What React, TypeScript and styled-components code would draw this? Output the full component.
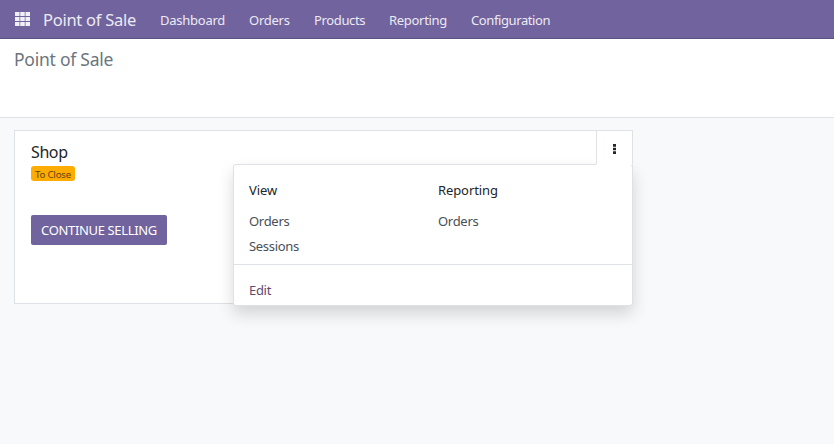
import React from "react";
import styled, { createGlobalStyle } from "styled-components";

const GlobalStyle = createGlobalStyle`
  * { box-sizing: border-box; }
  html, body { margin: 0; height: 100%; background: #f8f9fa; }
  body {
    font-family: "Noto Sans", "Open Sans", sans-serif;
    font-size: 13px;
    color: #212529;
  }
`;

const Page = styled.div`
  display: flex;
  flex-direction: column;
  width: 834px;
  height: 444px;
  overflow: hidden;
  background: #f8f9fb;
`;

const Navbar = styled.nav`
  display: flex;
  align-items: center;
  flex: none;
  height: 39px;
  padding: 0 0 0 15px;
  background: #71639e;
  border-bottom: 1px solid #5a4f7f;
  color: #eceaf3;
`;

const AppsIcon = styled.svg`
  display: block;
  flex: none;
  width: 15px;
  height: 14px;
  margin-right: 13px;
`;

const Brand = styled.a`
  flex: none;
  width: 117px;
  line-height: 38px;
  padding-top: 2px;
  font-size: 16.5px;
  letter-spacing: -0.27px;
  white-space: nowrap;
`;

const NavLink = styled.a<{ $width: number; $tracking: number }>`
  flex: none;
  width: ${(p) => p.$width}px;
  line-height: 38px;
  padding-top: 2px;
  letter-spacing: ${(p) => p.$tracking}px;
  white-space: nowrap;
`;

const ControlPanel = styled.header`
  flex: none;
  height: 79px;
  padding: 6px 14px;
  background: #fff;
  border-bottom: 1px solid #dee2e6;
`;

const Title = styled.h1`
  margin: 0;
  font-size: 17.5px;
  font-weight: 400;
  line-height: 28px;
  letter-spacing: -0.24px;
  color: #6c757d;
`;

const Content = styled.main`
  flex: 1;
  padding: 12px 14px;
`;

const Card = styled.section`
  position: relative;
  display: flex;
  flex-direction: column;
  align-items: flex-start;
  width: 619px;
  height: 174px;
  padding: 9px 16px;
  background: #fff;
  border: 1px solid #dee2e6;
`;

const CardTitle = styled.h2`
  margin: 0;
  font-size: 16px;
  font-weight: 400;
  line-height: 24px;
  letter-spacing: -0.4px;
`;

const Badge = styled.span`
  width: 44px;
  height: 15px;
  margin-top: 2px;
  padding: 0 4px;
  border-radius: 3px;
  background: #ffac00;
  color: #664500;
  font-size: 9.75px;
  letter-spacing: -0.24px;
  line-height: 17px;
  white-space: nowrap;
`;

const PrimaryButton = styled.button`
  width: 136px;
  height: 30px;
  margin-top: 34px;
  padding: 0;
  border: 0;
  border-radius: 2px;
  background: #71639e;
  color: #fff;
  font: inherit;
  line-height: 30px;
  letter-spacing: -0.35px;
  white-space: nowrap;
`;

const Toggle = styled.button`
  position: absolute;
  z-index: 2;
  top: -1px;
  right: -1px;
  display: flex;
  align-items: center;
  justify-content: center;
  width: 37px;
  height: 35px;
  padding: 3px 0 0;
  background: #fff;
  border: 1px solid #dee2e6;
  border-bottom-color: #fff;
`;

const Menu = styled.div`
  position: absolute;
  z-index: 1;
  top: 33px;
  right: -1px;
  width: 400px;
  height: 142px;
  background: #fff;
  border: 1px solid #dee2e6;
  border-radius: 3px;
  box-shadow: 0 8px 16px rgba(0, 0, 0, 0.15);
`;

const MenuColumns = styled.div`
  display: grid;
  grid-template-columns: 189px 1fr;
  height: 100px;
  padding: 13px 0 0 15px;
  border-bottom: 1px solid #dee2e6;
`;

const MenuHeading = styled.h5`
  margin: 0 0 6px;
  font-size: 13px;
  font-weight: 400;
  line-height: 25px;
  letter-spacing: -0.1px;
  color: #212529;
`;

const MenuItem = styled.a<{ $accent?: boolean }>`
  display: block;
  line-height: 25px;
  letter-spacing: -0.3px;
  color: ${(p) => (p.$accent ? "#5f4a72" : "#495057")};
`;

const MenuFooter = styled.div`
  padding: 13px 0 0 15px;
`;

const navLinks = [
  { label: "Dashboard", width: 89, tracking: -0.25 },
  { label: "Orders", width: 65, tracking: -0.25 },
  { label: "Products", width: 75, tracking: -0.35 },
  { label: "Reporting", width: 82, tracking: -0.3 },
  { label: "Configuration", width: 90, tracking: -0.4 },
];

const menuSections = [
  { heading: "View", items: ["Orders", "Sessions"] },
  { heading: "Reporting", items: ["Orders"] },
];

export default function App() {
  return (
    <Page>
      <GlobalStyle />
      <Navbar>
        <AppsIcon viewBox="0 0 15 14" fill="#f1eff5">
          {[0, 5, 10].map((y) =>
            [0, 5.25, 10.5].map((x) => (
              <rect key={`${x}-${y}`} x={x} y={y} width="4.5" height="4" />
            ))
          )}
        </AppsIcon>
        <Brand>Point of Sale</Brand>
        {navLinks.map((link) => (
          <NavLink key={link.label} $width={link.width} $tracking={link.tracking}>
            {link.label}
          </NavLink>
        ))}
      </Navbar>
      <ControlPanel>
        <Title>Point of Sale</Title>
      </ControlPanel>
      <Content>
        <Card>
          <CardTitle>Shop</CardTitle>
          <Badge>To Close</Badge>
          <PrimaryButton>CONTINUE SELLING</PrimaryButton>
          <Toggle aria-label="Options">
            <svg width="3" height="10" viewBox="0 0 3 10" fill="#212529">
              <rect width="3" height="2.8" rx="0.3" />
              <rect y="3.7" width="3" height="2.6" rx="0.3" />
              <rect y="7.2" width="3" height="2.8" rx="0.3" />
            </svg>
          </Toggle>
          <Menu>
            <MenuColumns>
              {menuSections.map((section) => (
                <div key={section.heading}>
                  <MenuHeading>{section.heading}</MenuHeading>
                  {section.items.map((item) => (
                    <MenuItem key={item}>{item}</MenuItem>
                  ))}
                </div>
              ))}
            </MenuColumns>
            <MenuFooter>
              <MenuItem $accent>Edit</MenuItem>
            </MenuFooter>
          </Menu>
        </Card>
      </Content>
    </Page>
  );
}
